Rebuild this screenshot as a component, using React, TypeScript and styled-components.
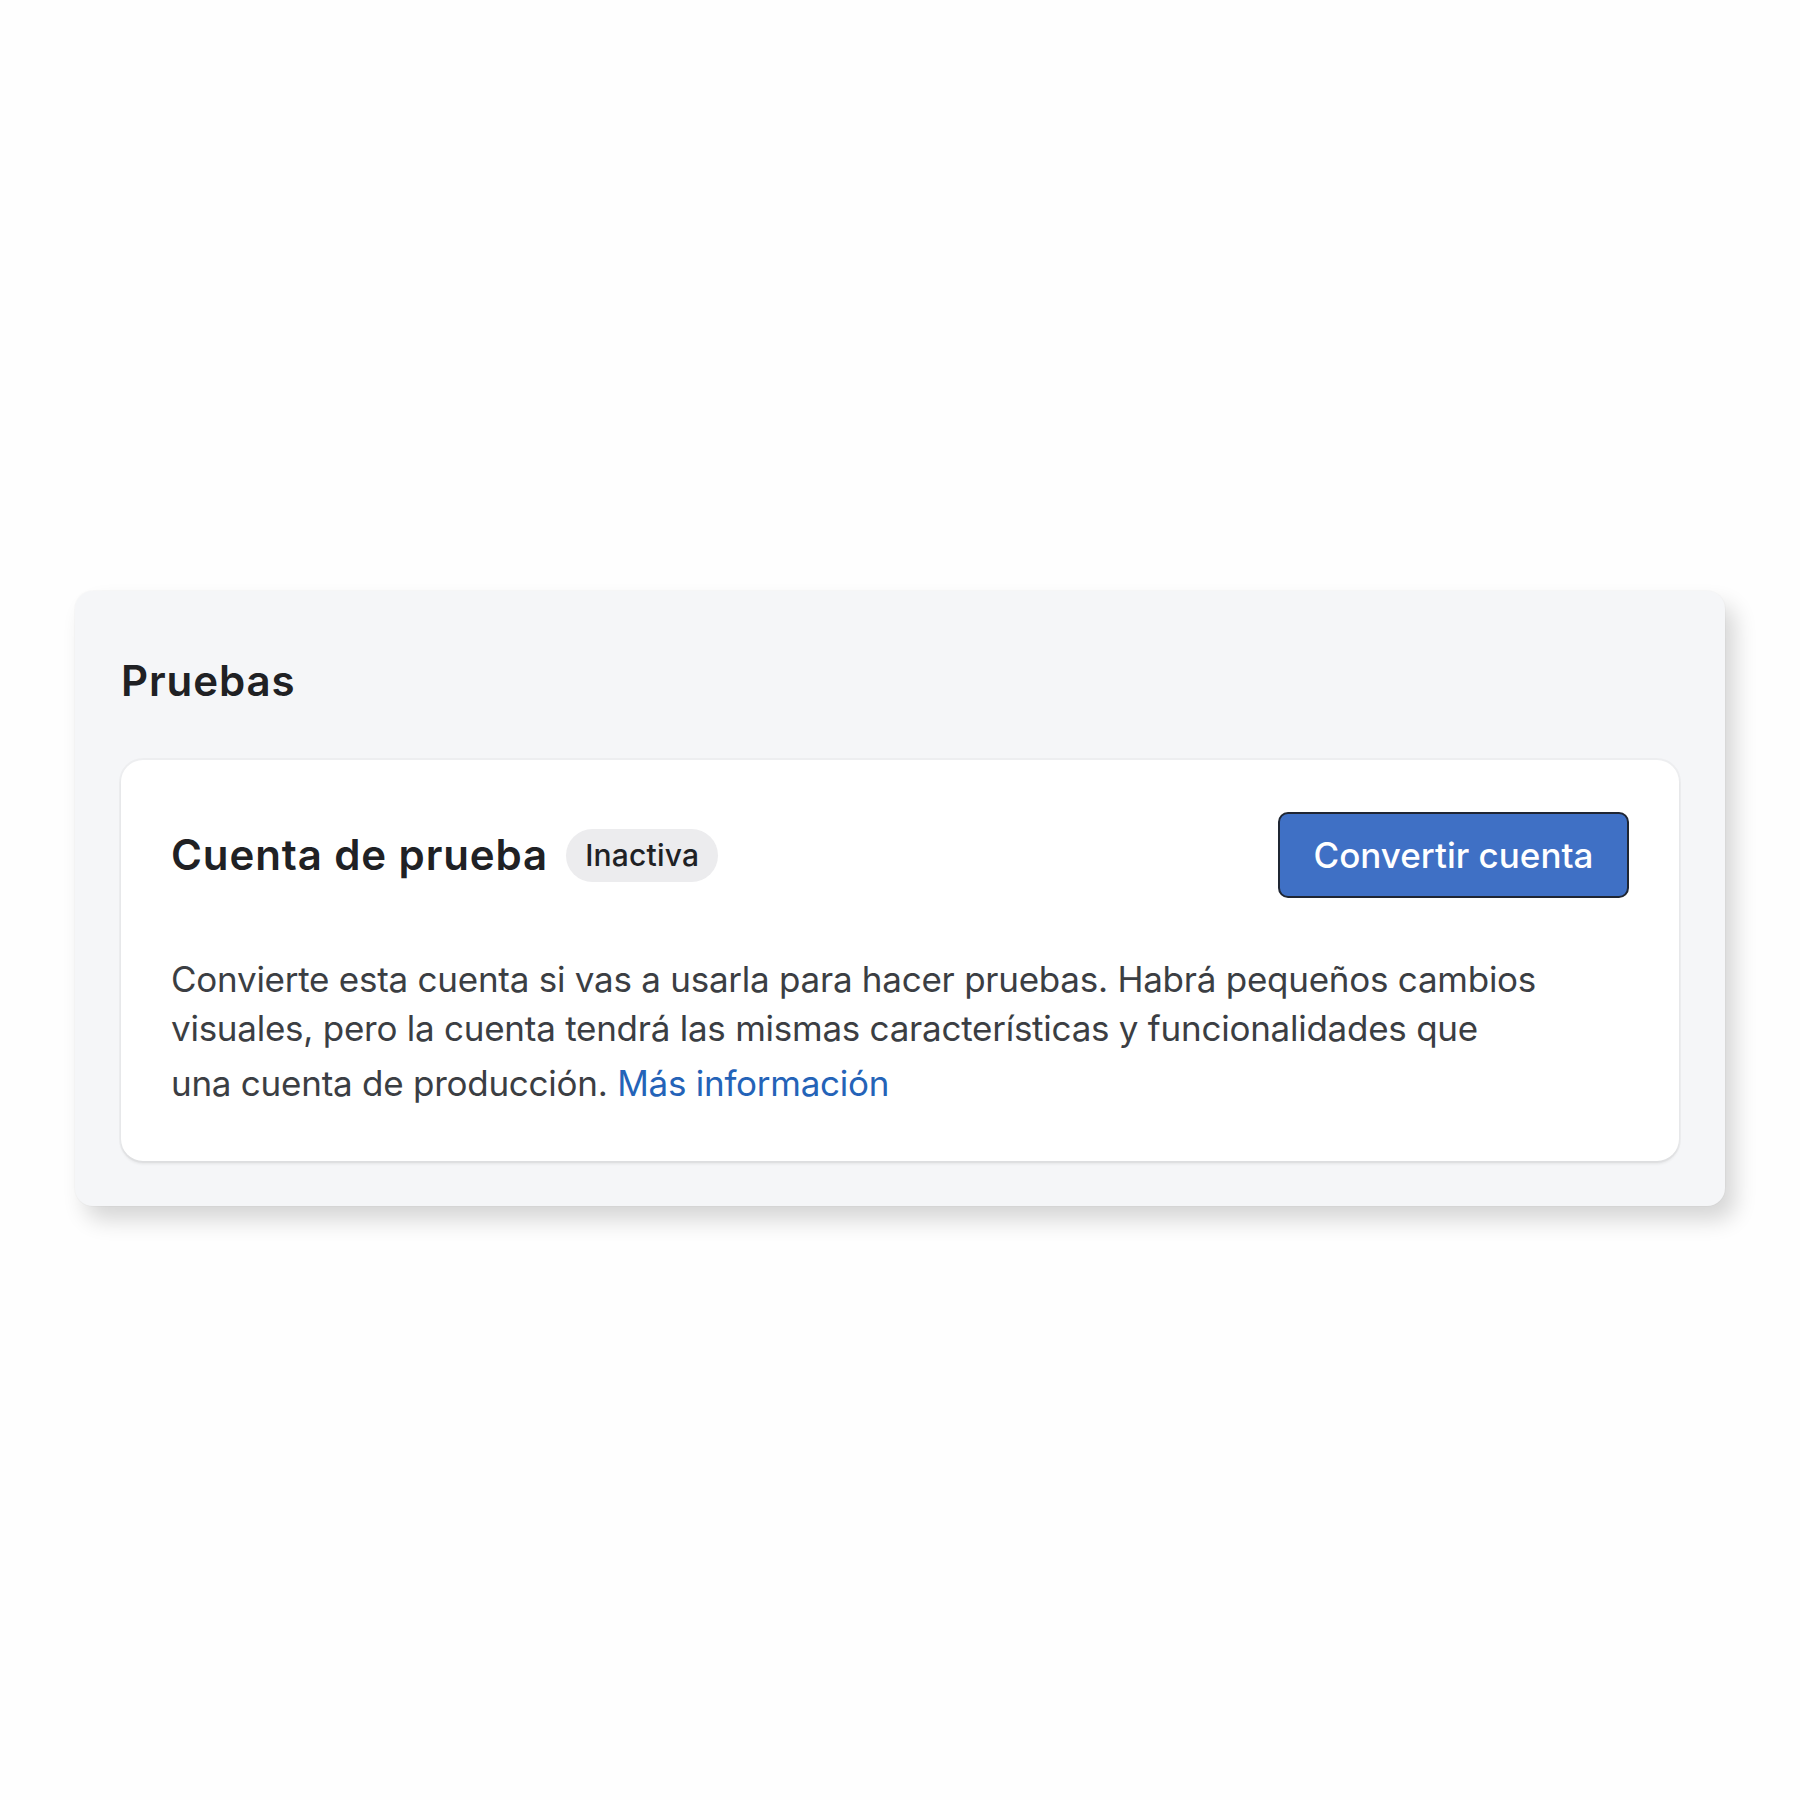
import React from "react";
import styled, { createGlobalStyle } from "styled-components";

const GlobalStyle = createGlobalStyle`
  html, body {
    margin: 0;
    padding: 0;
    background: #fefefe;
  }
  body {
    font-family: Inter, "Noto Sans", "Liberation Sans", sans-serif;
    -webkit-font-smoothing: antialiased;
  }
`;

const Page = styled.div`
  width: 1800px;
  height: 1800px;
  box-sizing: border-box;
  padding: 591px 0 0 75px;
`;

const Section = styled.section`
  width: 1650px;
  box-sizing: border-box;
  padding: 65px 46px 45px;
  background: #f5f6f8;
  border-radius: 18px;
  box-shadow: 10px 14px 22px rgba(0, 0, 0, 0.16), 0 0 0 1px rgba(0, 0, 0, 0.02);
`;

const SectionTitle = styled.h2`
  margin: 0 0 54px;
  padding-left: 0;
  font-size: 42px;
  line-height: 50px;
  font-weight: 600;
  letter-spacing: 0.9px;
  color: #202124;
`;

const Card = styled.div`
  background: #ffffff;
  border-radius: 22px;
  padding: 52px 50px 48px 50px;
  box-shadow: 0 3px 3px rgba(0, 0, 0, 0.07), 0 0 0 2px rgba(0, 0, 0, 0.03);
`;

const CardHeader = styled.div`
  display: flex;
  align-items: center;
  justify-content: space-between;
`;

const TitleGroup = styled.div`
  display: flex;
  align-items: center;
  gap: 18px;
`;

const CardTitle = styled.h3`
  margin: 0;
  font-size: 42px;
  line-height: 50px;
  font-weight: 600;
  letter-spacing: 0.9px;
  color: #202124;
`;

const Badge = styled.span`
  display: inline-flex;
  align-items: center;
  height: 53px;
  padding: 0 19px;
  border-radius: 27px;
  background: #ececee;
  color: #202124;
  font-size: 30px;
  font-weight: 500;
  letter-spacing: 0.2px;
`;

const PrimaryButton = styled.button`
  width: 351px;
  height: 86px;
  border: 2px solid #1f2633;
  border-radius: 10px;
  background: #3f70c5;
  color: #ffffff;
  font-family: inherit;
  font-size: 35px;
  font-weight: 500;
  cursor: pointer;
`;

const Description = styled.p`
  margin: 57px 0 0;
  font-size: 35px;
  line-height: 49px;
  font-weight: 400;
  letter-spacing: -0.25px;
  color: #3b3e43;
  white-space: nowrap;
`;

const Link = styled.a`
  color: #2463b8;
  text-decoration: none;
  line-height: 60px;
`;

export default function App() {
  return (
    <>
      <GlobalStyle />
      <Page>
        <Section>
          <SectionTitle>Pruebas</SectionTitle>
          <Card>
            <CardHeader>
              <TitleGroup>
                <CardTitle>Cuenta de prueba</CardTitle>
                <Badge>Inactiva</Badge>
              </TitleGroup>
              <PrimaryButton>Convertir cuenta</PrimaryButton>
            </CardHeader>
            <Description>
              Convierte esta cuenta si vas a usarla para hacer pruebas. Habrá pequeños cambios
              <br />
              visuales, pero la cuenta tendrá las mismas características y funcionalidades que
              <br />
              una cuenta de producción. <Link href="#">Más información</Link>
            </Description>
          </Card>
        </Section>
      </Page>
    </>
  );
}
